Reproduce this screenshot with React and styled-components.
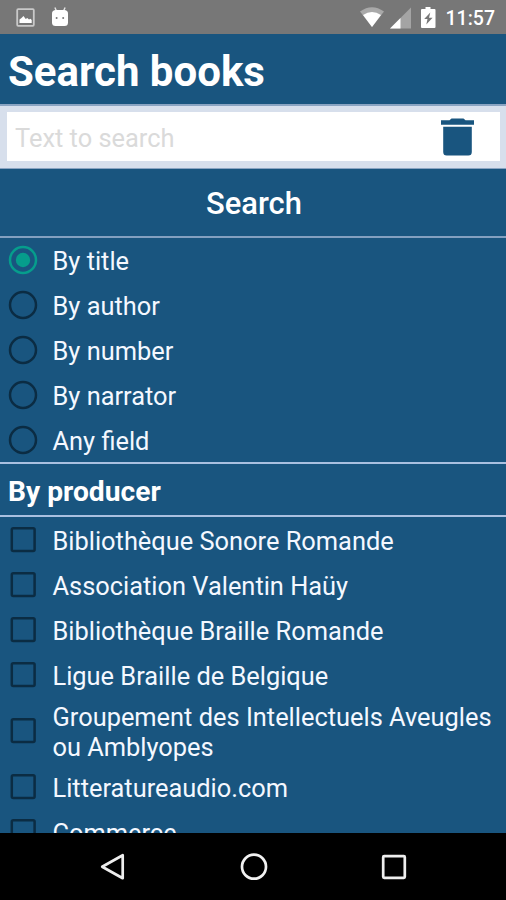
import React from "react";
import styled, { createGlobalStyle } from "styled-components";

const GlobalStyle = createGlobalStyle`
  * { box-sizing: border-box; }
  body { margin: 0; background: #000; font-family: Roboto, sans-serif; }
`;

const Screen = styled.div`
  width: 506px;
  height: 900px;
  display: flex;
  flex-direction: column;
  overflow: hidden;
  background: #19557f;
  color: #f4f8ff;
`;

const StatusBar = styled.header`
  flex: none;
  height: 34px;
  display: flex;
  align-items: center;
  justify-content: space-between;
  padding: 0 11px 0 16px;
  background: #777777;
`;

const StatusGroup = styled.div`
  display: flex;
  align-items: center;
  gap: ${(p) => p.$gap}px;
  svg { display: block; }
`;

const Clock = styled.span`
  font-size: 19.5px;
  font-weight: 500;
  line-height: 34px;
  padding-top: 3px;
  margin-left: 4px;
  color: #fff;
`;

const Title = styled.h1`
  flex: none;
  height: 70px;
  margin: 0;
  padding: 3px 8px 0;
  font-size: 42px;
  line-height: 70px;
  font-weight: 700;
  color: #fff;
`;

const SearchStrip = styled.div`
  flex: none;
  height: 65px;
  padding: 6px 6px 6px 7px;
  border-top: 2px solid #8aa4c2;
  border-bottom: 1px solid #8aa4c2;
  background: #d7dfec;
`;

const SearchField = styled.label`
  height: 49px;
  display: flex;
  align-items: center;
  justify-content: space-between;
  padding: 0 26px 0 8px;
  background: #fff;
  svg { flex: none; display: block; }
`;

const SearchInput = styled.input`
  flex: 1;
  min-width: 0;
  height: 49px;
  padding: 2px 0 0;
  border: 0;
  outline: 0;
  background: transparent;
  font: 400 25.4px Roboto, sans-serif;
  color: #333;
  &::placeholder { color: #dadada; opacity: 1; }
`;

const SearchButton = styled.button`
  flex: none;
  height: 69px;
  padding: 2px 0 0 2px;
  border: 0;
  border-bottom: 2px solid #83a0c0;
  background: transparent;
  color: #fff;
  font: 500 30.9px Roboto, sans-serif;
`;

const SectionTitle = styled.h2`
  flex: none;
  height: 55px;
  margin: 0;
  padding: 2px 8px 0;
  border-top: 2px solid #a9c0e0;
  border-bottom: 2px solid #a9c0e0;
  font-size: 28.2px;
  line-height: 52px;
  font-weight: 700;
  color: #fff;
`;

const Options = styled.div`
  flex: ${(p) => (p.$fill ? "1 1 0" : "none")};
  height: ${(p) => (p.$fill ? "auto" : "224px")};
  min-height: 0;
  overflow: hidden;
`;

const Option = styled.div`
  height: ${(p) => (p.$tall ? 67 : 45)}px;
  display: flex;
  align-items: center;
  padding-left: 8px;
  svg { flex: none; display: block; margin-bottom: ${(p) => (p.$tall ? 2 : 1)}px; }
`;

const OptionText = styled.span`
  padding: ${(p) => (p.$lower ? 4 : 2)}px 0 0 14.5px;
  font-size: 25.4px;
  line-height: 29.6px;
  white-space: pre-line;
`;

const NavBar = styled.nav`
  flex: none;
  height: 67px;
  display: flex;
  justify-content: center;
  align-items: center;
  gap: 110.5px;
  padding-left: 1px;
  background: #000;
  svg { display: block; }
`;

const PictureIcon = () => (
  <svg width="19" height="19" viewBox="0 0 19 19">
    <rect x="1.2" y="1.2" width="16.6" height="16.6" rx="1" fill="none" stroke="#c9c9c9" strokeWidth="1.8" />
    <path d="M3.5 15v-3.5l2-1.5 2-2 2.2 3 1.6-1 1.7 1.5 1.5-.8 1.2 1.3v3z" fill="#fff" />
  </svg>
);

const RobotIcon = () => (
  <svg width="18" height="21" viewBox="0 0 18 21">
    <path d="M3.900 .5l1.800 4M14.100 .5l-1.800 4" stroke="#e6e6e6" strokeWidth="1.400" />
    <path d="M1 6.500Q1 3 5 3h8q4 0 4 3.500v9q0 3.500-3.500 3.500h-9Q1 19 1 15.500z" fill="#fff" />
    <circle cx="5.6" cy="11" r="1" fill="#777" />
    <circle cx="12.2" cy="11" r="1" fill="#777" />
  </svg>
);

const WifiIcon = () => (
  <svg width="24" height="20" viewBox="0 0 24 20">
    <path d="M0 4.500Q12-4 24 4.500L12 20z" fill="#a9a9a9" />
    <path d="M3 8.100Q12 2 21 8.100L12 20z" fill="#fff" />
  </svg>
);

const SignalIcon = () => (
  <svg width="21" height="23" viewBox="0 0 21 23">
    <path d="M21 1.500v21H0z" fill="#a4a4a4" />
    <path d="M10.500 12V22.500H0z" fill="#fff" />
  </svg>
);

const BatteryIcon = () => (
  <svg width="19" height="21" viewBox="-4 0 19 21">
    <path d="M4.500 0h5v2H13.500q1 0 1 1v17q0 1-1 1H1q-1 0-1-1V3q0-1 1-1h3.500z" fill="#fff" />
    <path d="M9.300 5.500L3.200 12h3.300l-1.200 5.500 6.300-6.700H8z" fill="#777" />
  </svg>
);

const TrashIcon = () => (
  <svg width="33" height="38" viewBox="0 0 33 38">
    <path d="M0 2.300h8.500L10.500 .5h12l2 1.800H33v4.400H0z" fill="#19557f" />
    <path d="M2.200 8.700h28.600V34q0 3.500-3.500 3.500H5.700Q2.200 37.500 2.200 34z" fill="#19557f" />
  </svg>
);

const RadioMark = ({ checked }) => (
  <svg width="30" height="30" viewBox="0 0 30 30">
    <circle cx="15" cy="15" r="13" fill="none" stroke={checked ? "#069d8c" : "#0b2c43"} strokeWidth="2.500" />
    {checked && <circle cx="15" cy="15" r="7.200" fill="#069d8c" />}
  </svg>
);

const CheckMark = () => (
  <svg width="30" height="30" viewBox="0 0 30 30">
    <rect x="3.800" y="4.300" width="22.800" height="22.800" rx="1.500" fill="none" stroke="#0b2c43" strokeWidth="2.500" />
  </svg>
);

const BackIcon = () => (
  <svg width="30" height="30" viewBox="0 0 30 30">
    <path d="M24.700 3.200v23L4.200 14.700z" fill="none" stroke="#eee" strokeWidth="2.700" strokeLinejoin="round" />
  </svg>
);

const HomeIcon = () => (
  <svg width="30" height="30" viewBox="0 0 30 30">
    <circle cx="15" cy="14.700" r="12" fill="none" stroke="#f2f2f2" strokeWidth="2.700" />
  </svg>
);

const RecentIcon = () => (
  <svg width="30" height="30" viewBox="0 0 30 30">
    <rect x="4.200" y="4.200" width="21.600" height="21.600" rx="1" fill="none" stroke="#eee" strokeWidth="2.700" />
  </svg>
);

const fields = ["By title", "By author", "By number", "By narrator", "Any field"];

const producers = [
  "Bibliothèque Sonore Romande",
  "Association Valentin Haüy",
  "Bibliothèque Braille Romande",
  "Ligue Braille de Belgique",
  "Groupement des Intellectuels Aveugles\nou Amblyopes",
  "Litteratureaudio.com",
  "Commerce",
];

export default function App() {
  return (
    <>
      <GlobalStyle />
      <Screen>
        <StatusBar>
          <StatusGroup $gap={16}>
            <PictureIcon />
            <RobotIcon />
          </StatusGroup>
          <StatusGroup $gap={6}>
            <WifiIcon />
            <SignalIcon />
            <BatteryIcon />
            <Clock>11:57</Clock>
          </StatusGroup>
        </StatusBar>
        <Title>Search books</Title>
        <SearchStrip>
          <SearchField>
            <SearchInput placeholder="Text to search" />
            <TrashIcon />
          </SearchField>
        </SearchStrip>
        <SearchButton>Search</SearchButton>
        <Options>
          {fields.map((name, i) => (
            <Option key={name}>
              <RadioMark checked={i === 0} />
              <OptionText>{name}</OptionText>
            </Option>
          ))}
        </Options>
        <SectionTitle>By producer</SectionTitle>
        <Options $fill>
          {producers.map((name) => (
            <Option key={name} $tall={name.includes("\n")}>
              <CheckMark />
              <OptionText $lower>{name}</OptionText>
            </Option>
          ))}
        </Options>
        <NavBar>
          <BackIcon />
          <HomeIcon />
          <RecentIcon />
        </NavBar>
      </Screen>
    </>
  );
}
